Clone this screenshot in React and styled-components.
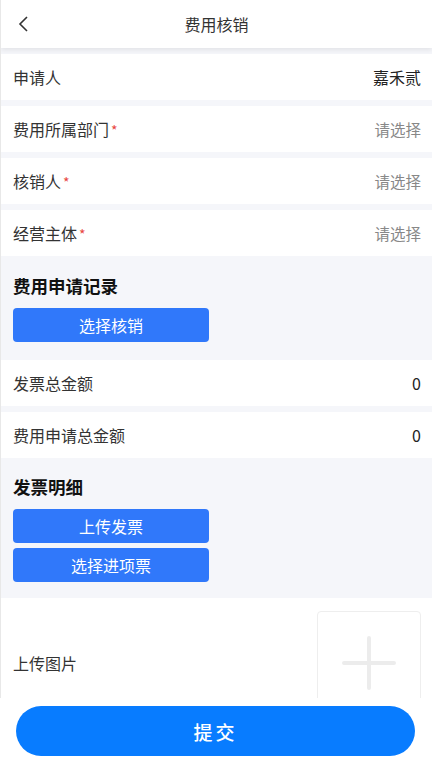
import React from "react";
import styled, { createGlobalStyle } from "styled-components";

const GlobalStyle = createGlobalStyle`
  html, body {
    margin: 0;
    padding: 0;
    background: #ffffff;
    font-family: "Noto Sans CJK SC", "Noto Sans", sans-serif;
    color: #333;
  }
  * { box-sizing: border-box; }
`;

const fields = [
  { label: "费用所属部门", required: true },
  { label: "核销人", required: true },
  { label: "经营主体", required: true },
];

const App = () => {
  return (
    <>
      <GlobalStyle />
      <Page>
        <Header>
          <BackButton>
            <svg width="12" height="18" viewBox="0 0 12 18">
              <path d="M10 2 L3 9 L10 16" fill="none" stroke="#333" strokeWidth="1.6" />
            </svg>
          </BackButton>
          <Title>费用核销</Title>
        </Header>

        <Body>
          <Row>
            <Label>申请人</Label>
            <Value>嘉禾贰</Value>
          </Row>
          {fields.map((f) => (
            <Row key={f.label}>
              <Label>
                {f.label}
                {f.required && <Star>*</Star>}
              </Label>
              <Placeholder>请选择</Placeholder>
            </Row>
          ))}

          <Section>
            <SectionTitle>费用申请记录</SectionTitle>
            <BlueButton>选择核销</BlueButton>
          </Section>

          <Row>
            <Label>发票总金额</Label>
            <Value>0</Value>
          </Row>
          <Row $gap={6}>
            <Label>费用申请总金额</Label>
            <Value>0</Value>
          </Row>

          <Section $top={18} $bottom={16}>
            <SectionTitle>发票明细</SectionTitle>
            <BlueButton>上传发票</BlueButton>
            <BlueButton $gap={5}>选择进项票</BlueButton>
          </Section>

          <UploadRow>
            <Label>上传图片</Label>
            <UploadBox>
              <svg width="56" height="56" viewBox="0 0 56 56">
                <path d="M28 3 V53 M3 28 H53" stroke="#ececec" strokeWidth="4" strokeLinecap="round" />
              </svg>
            </UploadBox>
          </UploadRow>
        </Body>
      </Page>

      <BottomBar>
        <SubmitButton>提交</SubmitButton>
      </BottomBar>
    </>
  );
};

const Page = styled.div`
  height: 768px;
  overflow: hidden;
  border-left: 1px solid #e8e8e8;
  background: #f5f6fa;
`;

const Header = styled.div`
  position: relative;
  z-index: 2;
  height: 48px;
  display: flex;
  align-items: center;
  justify-content: center;
  background: #fff;
  box-shadow: 0 2px 5px rgba(0, 0, 0, 0.08);
`;

const BackButton = styled.div`
  position: absolute;
  left: 16px;
  top: 15px;
  display: flex;
`;

const Title = styled.div`
  font-size: 16px;
  color: #333;
`;

const Body = styled.div`
  display: flex;
  flex-direction: column;
  padding-top: 6px;
`;

const Row = styled.div`
  height: 46px;
  display: flex;
  align-items: center;
  justify-content: space-between;
  padding: 0 11px 0 12px;
  background: #fff;
  margin-top: ${(p) => (p.$gap ? `${p.$gap}px` : "0")};
  & + & {
    margin-top: 6px;
  }
`;

const Label = styled.div`
  font-size: 16px;
  color: #333;
  display: flex;
  align-items: center;
`;

const Star = styled.span`
  color: #e8463f;
  font-size: 14px;
  margin-left: 2px;
  margin-top: 2px;
`;

const Value = styled.div`
  font-size: 16px;
  color: #222;
`;

const Placeholder = styled.div`
  font-size: 15.5px;
  color: #888;
`;

const Section = styled.div`
  display: flex;
  flex-direction: column;
  align-items: flex-start;
  padding: ${(p) => p.$top || 19}px 12px ${(p) => p.$bottom || 18}px;
  background: #f5f6fa;
`;

const SectionTitle = styled.div`
  font-size: 17.5px;
  font-weight: 700;
  color: #111;
  line-height: 22px;
  margin-bottom: 11px;
`;

const BlueButton = styled.button`
  width: 196px;
  height: 34px;
  border: none;
  border-radius: 4px;
  background: #3078fa;
  color: #fff;
  font-family: inherit;
  font-size: 16px;
  margin-top: ${(p) => (p.$gap ? `${p.$gap}px` : "0")};
  padding: 0;
`;

const UploadRow = styled.div`
  display: flex;
  align-items: center;
  justify-content: space-between;
  padding: 13px 11px 13px 12px;
  background: #fff;
`;

const UploadBox = styled.div`
  width: 104px;
  height: 104px;
  border: 1px solid #eeeeee;
  border-radius: 4px;
  display: flex;
  align-items: center;
  justify-content: center;
`;

const BottomBar = styled.div`
  position: fixed;
  left: 0;
  right: 0;
  bottom: 0;
  height: 70px;
  background: #fff;
  padding: 8px 17px 12px 16px;
  z-index: 5;
`;

const SubmitButton = styled.button`
  width: 100%;
  height: 50px;
  border: none;
  border-radius: 25px;
  background: #087cff;
  color: #fff;
  font-family: inherit;
  font-size: 19px;
  font-weight: 500;
  letter-spacing: 3px;
  padding: 0;
`;

export default App;
